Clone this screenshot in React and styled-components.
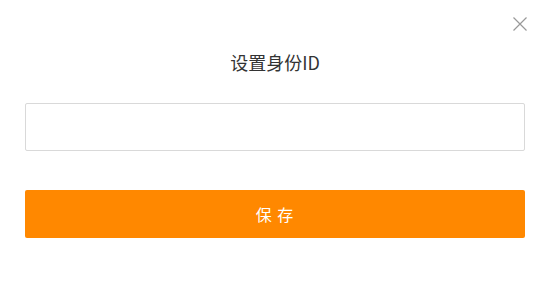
import React from "react";
import styled, { createGlobalStyle } from "styled-components";

const GlobalStyle = createGlobalStyle`
  body {
    margin: 0;
    background: #fff;
    font-family: "Noto Sans CJK SC", "Noto Sans", sans-serif;
  }
`;

const Dialog = styled.div`
  position: relative;
  width: 550px;
  height: 300px;
  box-sizing: border-box;
  padding: 50px 25px 0;
  display: flex;
  flex-direction: column;
  background: #fff;
`;

const CloseButton = styled.button`
  position: absolute;
  top: 16px;
  right: 22px;
  width: 16px;
  height: 16px;
  padding: 0;
  border: none;
  background: none;
  cursor: pointer;
  display: flex;
`;

const Title = styled.h2`
  margin: 0;
  font-size: 18px;
  line-height: 24px;
  font-weight: 400;
  color: #333;
  text-align: center;
`;

const Input = styled.input`
  margin-top: 29px;
  height: 48px;
  box-sizing: border-box;
  border: 1px solid #d9d9d9;
  border-radius: 2px;
  padding: 0 12px;
  font-size: 14px;
  outline: none;
`;

const SaveButton = styled.button`
  margin-top: 39px;
  height: 48px;
  border: none;
  border-radius: 2px;
  background: #ff8800;
  color: #fff;
  font-family: inherit;
  font-size: 16px;
  letter-spacing: 1px;
  cursor: pointer;
`;

export default function App() {
  return (
    <>
      <GlobalStyle />
      <Dialog>
        <CloseButton aria-label="close">
          <svg width="16" height="16" viewBox="0 0 16 16">
            <path d="M1.5 1.5 L14.5 14.5 M14.5 1.5 L1.5 14.5" stroke="#999" strokeWidth="1.2" fill="none" />
          </svg>
        </CloseButton>
        <Title>设置身份ID</Title>
        <Input type="text" />
        <SaveButton>保 存</SaveButton>
      </Dialog>
    </>
  );
}
